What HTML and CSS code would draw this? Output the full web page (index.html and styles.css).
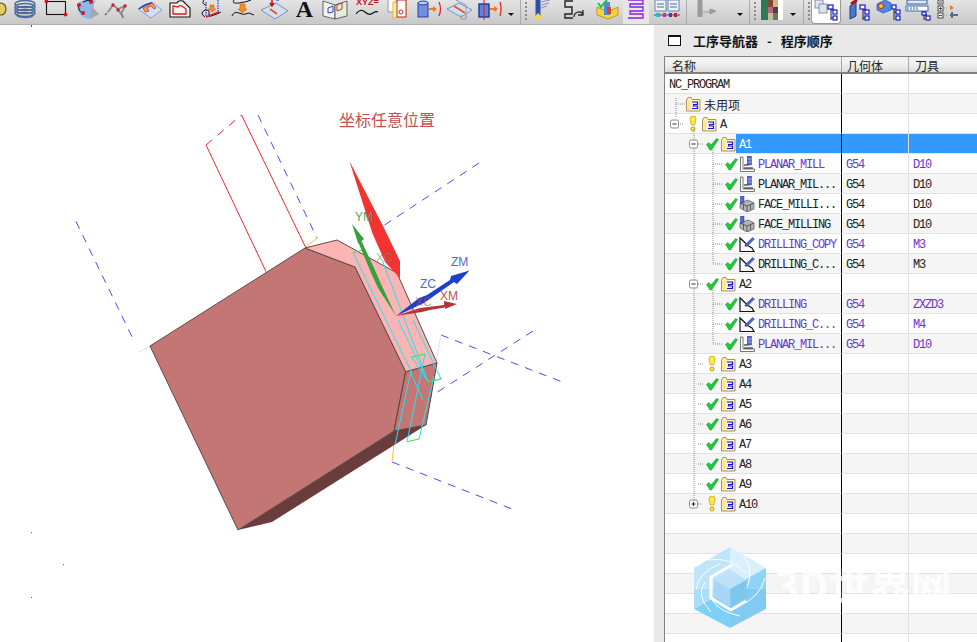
FILE: index.html
```html
<!DOCTYPE html>
<html lang="zh">
<head>
<meta charset="utf-8">
<title>工序导航器</title>
<link rel="stylesheet" href="styles.css">
</head>
<body>
<svg class="defs" width="0" height="0">
  <defs>
    <symbol id="check" viewBox="0 0 16 16">
      <path d="M2.5 8.5 L5 6.5 L7 9 L12.5 2.5 L14.5 3.5 L7.5 14 L6 14 Z" fill="#1fc93a" stroke="#128a26" stroke-width=".5"/>
    </symbol>
    <symbol id="bulb" viewBox="0 0 16 16">
      <path d="M5 3 Q5 0 8 0 Q11 0 11 3 Q11 5 9.5 9 L6.5 9 Q5 5 5 3 Z" fill="#ffe84a" stroke="#c9a400" stroke-width=".8"/>
      <circle cx="8" cy="13" r="2" fill="#ffe84a" stroke="#a88a00" stroke-width=".8"/>
    </symbol>
    <symbol id="folder" viewBox="0 0 16 16">
      <path d="M1.5 3.5 V15 H15 V3.5 H7 L6 1.5 H3 L2 3.5 Z" fill="#fff3c2" stroke="#a8925a" stroke-width="1"/>
      <path d="M7 6 H12.5 V8.5 H8.5 V10 H12.5 V12.5 H7" fill="none" stroke="#1212e0" stroke-width="1.2"/>
      <rect x="2.5" y="4.5" width="3" height="9.5" fill="#ffe58f"/>
    </symbol>
    <symbol id="mill" viewBox="0 0 16 16">
      <path d="M1.5 1 V15.5 H15.5 V13 H4 V1 Z" fill="#fff" stroke="#666" stroke-width=".9"/>
      <path d="M5 12 H14 M5 9 H9 V1" fill="none" stroke="#111" stroke-width="1"/>
      <rect x="8.5" y="0" width="4" height="9" fill="#5a66c8" stroke="#2c3590" stroke-width=".5"/>
      <path d="M8.5 3 H12.5 M8.5 6 H12.5" stroke="#b8c0f0" stroke-width=".8"/>
    </symbol>
    <symbol id="face" viewBox="0 0 16 16">
      <path d="M1 7 L9 4 L15 7 V13 L8 16 L1 12 Z" fill="#b4b4b4" stroke="#555" stroke-width=".7"/>
      <path d="M1 7 L8 10 L15 7 M8 10 V16 M4.5 8.5 V13.5 M11.5 8.5 V14" fill="none" stroke="#444" stroke-width=".8"/>
      <rect x="1.5" y="0" width="3.5" height="7" fill="#5a66c8" stroke="#2c3590" stroke-width=".5"/>
    </symbol>
    <symbol id="drill" viewBox="0 0 16 16">
      <path d="M1 2 V15.5 H15 L13 12 L9 9.5 L1 2 Z" fill="#fff" stroke="#111" stroke-width="1.2"/>
      <path d="M6 9 L13.5 1.5 L15.5 3 L8 10.5 Z" fill="#4d66d0" stroke="#2c3590" stroke-width=".5"/>
      <path d="M5 10 L7 9 L7.5 10.5 Z" fill="#222"/>
    </symbol>
  </defs>
</svg>

<header class="toolbar">
  <svg class="tb-cut" viewBox="0 0 10 24"><ellipse cx="1" cy="9" rx="5" ry="6" fill="#e4cc66" stroke="#6a5a18" stroke-width="1.2"/></svg>
  <svg class="tb" viewBox="0 0 31 24"><g fill="none" stroke="#4d6d9c" stroke-width="1.4"><ellipse cx="15" cy="4" rx="10" ry="3.5"/><ellipse cx="15" cy="7" rx="10" ry="3.5"/><ellipse cx="15" cy="10" rx="10" ry="3.5"/><ellipse cx="15" cy="13" rx="10" ry="3.5"/><ellipse cx="15" cy="15" rx="8" ry="2.6"/></g></svg>
  <svg class="tb" viewBox="0 0 31 24"><rect x="5.5" y="1.5" width="19" height="13" fill="none" stroke="#111" stroke-width="1.1"/><circle cx="5.5" cy="1.5" r="2" fill="#d81818"/><circle cx="24.5" cy="14.5" r="2" fill="#d81818"/></svg>
  <svg class="tb" viewBox="0 0 31 24"><path d="M5 5 Q10 -3 24 1 Q18 8 27 14 L18 19 Q6 18 5 5 Z" fill="#8cb8e8"/><path d="M18 19 L27 14 L20 7 Z" fill="#a8a8a8"/><path d="M7 4 Q5 11 12 14 M11 2 Q16 -1 21 1" fill="none" stroke="#111" stroke-width="1"/><g fill="#d81818"><circle cx="7" cy="5" r="2"/><circle cx="11" cy="13" r="2"/><circle cx="19" cy="2" r="2"/></g></svg>
  <svg class="tb" viewBox="0 0 31 24"><path d="M5 12 L10 5 L15 9 L22 6 L18 14 L15 9" fill="none" stroke="#8a8a8a" stroke-width="1.8"/><path d="M4 13 L2 15 M19 14 L20 18" stroke="#777" stroke-width="1.6"/><g fill="#c8242a"><circle cx="10" cy="5" r="1.7"/><circle cx="15" cy="10" r="1.7"/><circle cx="22" cy="6" r="1.7"/></g></svg>
  <svg class="tb" viewBox="0 0 31 24"><path d="M4 9 L18 2 L28 10 L17 18 Z" fill="#cfe0f4" stroke="#8aa0c0"/><path d="M5 9 Q11 4 18 3" fill="none" stroke="#1f3fd0" stroke-width="1.4"/><path d="M9 8 L18 3 L22 8 L20 9 L17 6 L13 8 L15 11 L11 12 Z" fill="#f0a050" stroke="#d02020" stroke-width=".7"/></svg>
  <svg class="tb" viewBox="0 0 31 24"><path d="M5 3 L5 17 H25 V8 L18 1 Q13 0 12 3 Z" fill="#f4f4f4" stroke="#111" stroke-width="1.1"/><path d="M8 6 L8 14 H21 V9 L17 6 Q14 5 13 7 Z" fill="none" stroke="#e01818" stroke-width="1.3"/></svg>
  <svg class="tb" viewBox="0 0 31 24"><path d="M8 0 Q5 4 10 5 M9 17 Q3 13 9 10 Q14 9 13 15 Q13 17 15 16 Q22 14 25 12" fill="none" stroke="#111" stroke-width="1"/><path d="M10 17 L23 12" stroke="#e01818" stroke-width="1.4"/><path d="M10 2 V16 M22 0 V13" stroke="#1414e0" stroke-width="1" stroke-dasharray="1.5 1"/><path d="M14 5 H18 V9 H20 L16 12 L12 9 H14 Z" fill="#f09020" stroke="#c85010" stroke-width=".5"/></svg>
  <svg class="tb" viewBox="0 0 31 24"><path d="M7 0 Q4 4 12 3 Q20 2 24 0 M5 16 Q7 11 12 13 Q16 16 22 13 L27 15" fill="none" stroke="#111" stroke-width="1"/><path d="M13 4 H18 V9 H20 L15.500 13 L11 9 H13 Z" fill="#f09020" stroke="#c85010" stroke-width=".5"/></svg>
  <svg class="tb" viewBox="0 0 31 24"><path d="M3 10 L18 3 L30 11 L17 19 Z" fill="#cfe0f4" stroke="#7a92b4"/><path d="M12 9 L19 14" stroke="#f05010" stroke-width="1.6"/><path d="M14 0 V5 M12 3 L14 6 L16 3" fill="none" stroke="#c01010" stroke-width="1.5"/><path d="M18 0 H21" stroke="#1414e0" stroke-width="1"/></svg>
  <svg class="tb" viewBox="0 0 31 24"><text class="tb-a" x="15.500" y="17" text-anchor="middle">A</text></svg>
  <svg class="tb" viewBox="0 0 31 24"><path d="M3 1 L15 5 V19 L3 16 Z" fill="#f0f4ea" stroke="#444" stroke-width=".8"/><path d="M15 5 L27 1 V16 L15 19 Z" fill="#dfeedd" stroke="#444" stroke-width=".8"/><path d="M8 8 L13 6 V12 L8 13 Z" fill="none" stroke="#3040c8"/><path d="M17 5 L22 3 V9 L17 11 Z" fill="none" stroke="#d03030"/></svg>
  <svg class="tb" viewBox="0 0 31 24"><text class="tb-xyz" x="5" y="5">XYZ=</text><path d="M5 14 Q9 8 14 12 Q18 16 22 13 Q25 11 27 12" fill="none" stroke="#111" stroke-width="1.2"/></svg>
  <svg class="tb" viewBox="0 0 31 24"><path d="M6 0 V12 H14 V0" fill="#f8f8f8" stroke="#999"/><path d="M11 2 H24 V17 H13 L11 19 Z" fill="#ffef9a" stroke="#d8c030"/><path d="M15 0 H24 V17 H15 Z" fill="#fff" stroke="#d02020"/><circle cx="19" cy="12" r="2" fill="none" stroke="#d02020"/></svg>
  <svg class="tb" viewBox="0 0 31 24"><rect x="5" y="3" width="10" height="14" fill="#6f8fe0" stroke="#2c3fa0"/><ellipse cx="10" cy="3" rx="5" ry="2" fill="#b8c8f0" stroke="#2c3fa0"/><path d="M16 8 H20 V6 L24 9 L20 12 V10 H16 Z" fill="#f07818"/><path d="M26 2 Q29 9 26 16" fill="none" stroke="#e02020" stroke-width="1.2"/></svg>
  <svg class="tb" viewBox="0 0 31 24"><path d="M3 9 L15 3 L28 10 L17 17 Z" fill="#cfe0f4" stroke="#7a92b4"/><path d="M10 6 L21 13" stroke="#f05010" stroke-width="1.500"/><path d="M12 0 L22 5 V19 H17 V15" fill="none" stroke="#8a98c0"/></svg>
  <svg class="tb" viewBox="0 0 31 24"><rect x="4" y="4" width="10" height="13" fill="#5f83d8" stroke="#1838a0" stroke-width="1.4"/><path d="M9 0 V20" stroke="#d02020"/><path d="M15 8 H19 V6 L23 9 L19 12 V10 H15 Z" fill="#f07818"/><path d="M25 2 Q27 9 25 16" fill="none" stroke="#e02020" stroke-width="1.2"/></svg>
  <span class="caret"></span>

  <span class="sep sep-a"></span>
  <svg class="tn" viewBox="0 0 26 24"><path d="M13 0 V16" stroke="#3050a8" stroke-width="5"/><path d="M16 2 L25 0 M16 5 L24 3 M16 8 L22 6" stroke="#8a9ab8" stroke-width="1.2"/><path d="M9 17 L13 13 L17 17 L13 20 Z" fill="#f4d848"/></svg>
  <svg class="tn ml9" viewBox="0 0 26 24"><path d="M13 1 H5 V7 H12 V14 H5 V18 H13" fill="none" stroke="#222" stroke-width="1.4"/><path d="M14 17 A5 5 0 0 1 23 14 M23 10 V15 H18" fill="none" stroke="#222" stroke-width="1.3"/></svg>
  <svg class="tn ml8" viewBox="0 0 26 24"><path d="M3 7 L14 12 L24 7 V15 L14 19 L3 15 Z" fill="#f6d43c" stroke="#b89a20"/><rect x="10" y="2" width="6" height="13" fill="#4d8ad8"/><rect x="13" y="7" width="4" height="7" fill="#e0402a"/><path d="M4 3 L7 7 L13 0" fill="none" stroke="#28c040" stroke-width="2"/></svg>
  <svg class="tn hl ml3" viewBox="0 0 26 24"><path d="M5 0 H20 V4 H7 V7 H20 V11 H7 V14 H20 V18 H5" fill="none" stroke="#8a20e0" stroke-width="1.300"/></svg>
  <svg class="tn ml5" viewBox="0 0 26 24"><path d="M1 0 H12 V11 H1 Z M14 0 H25 V11 H14 Z" fill="#eef2fa" stroke="#4d6d9c" stroke-width=".8"/><path d="M3 4 H10 M3 7 H10 M16 4 H23 M16 7 H23" stroke="#4d6d9c"/><path d="M0 15 H26" stroke="#446" stroke-width="1"/><g><rect x="2" y="13" width="4" height="4" fill="#1fc0c8"/><rect x="9" y="13" width="3" height="4" fill="#e020a0"/><rect x="15" y="13" width="3" height="4" fill="#3040c8"/><rect x="20" y="13" width="3" height="4" fill="#c02030"/></g></svg>
  <span class="sep sep-b"></span>
  <svg class="tn" viewBox="0 0 26 24"><path d="M9 0 V17" stroke="#9a9a9a" stroke-width="5"/><path d="M12 12 H19 V9 L25 11 L19 14 V12" fill="#9a9a9a" stroke="#9a9a9a"/></svg>
  <span class="caret ml18"></span>
  <span class="sep sep-c"></span>
  <svg class="tn ml5" viewBox="0 0 26 24"><rect x="2" y="0" width="22" height="20" fill="#fff"/><rect x="2" y="0" width="7" height="20" fill="#2e7a52"/><rect x="9" y="0" width="5" height="7" fill="#7a4a34"/><rect x="14" y="0" width="5" height="7" fill="#d8b090"/><rect x="9" y="7" width="5" height="6" fill="#c0607a"/><rect x="14" y="7" width="5" height="6" fill="#46463c"/><rect x="9" y="13" width="5" height="7" fill="#c8b8a0"/><rect x="14" y="13" width="5" height="7" fill="#6a7a58"/></svg>
  <span class="caret ml3"></span>
  <span class="sep sep-d"></span>
  <span class="tab-on"><svg class="tn" viewBox="0 0 26 24"><rect x="2" y="0" width="8" height="8" fill="#dce6f4" stroke="#5a6a8a" stroke-width=".7"/><rect x="6" y="4" width="8" height="9" fill="#dce6f4" stroke="#5a6a8a" stroke-width=".7"/><path d="M18 6 V20 M18 10 H22 M18 18 H22" stroke="#222"/><g fill="#fff" stroke="#1818d0" stroke-width="1.200"><rect x="15" y="5" width="5" height="4"/><rect x="20" y="10" width="4" height="4"/><rect x="20" y="16" width="4" height="4"/></g></svg></span>
  <svg class="tn ml4" viewBox="0 0 26 24"><path d="M5 6 L11 2 V16 L5 19 Z" fill="#4a78c8" stroke="#1c3a88"/><path d="M6 4 L12 0" stroke="#b01818" stroke-width="3"/><path d="M18 6 V20 M18 10 H22 M18 18 H22" stroke="#222"/><g fill="#fff" stroke="#1818d0" stroke-width="1.200"><rect x="15" y="5" width="5" height="4"/><rect x="20" y="10" width="4" height="4"/><rect x="20" y="16" width="4" height="4"/></g></svg>
  <svg class="tn ml4" viewBox="0 0 26 24"><path d="M2 4 L10 0 L16 3 V10 L8 13 L2 10 Z" fill="#4d8ae8" stroke="#2050a8" stroke-width=".7"/><circle cx="6" cy="6" r="2.500" fill="#f0d030" stroke="#d02020"/><path d="M19 5 V20 M19 12 H22" stroke="#222"/><g fill="#fff" stroke="#1818d0" stroke-width="1.200"><rect x="17" y="5" width="4" height="4"/><rect x="21" y="10" width="4" height="4"/><rect x="21" y="16" width="4" height="4"/></g></svg>
  <svg class="tn ml4" viewBox="0 0 26 24"><rect x="2" y="0" width="20" height="4" fill="#dce6f4" stroke="#1c3a88" stroke-width=".8"/><rect x="1" y="6" width="22" height="5" fill="#fff" stroke="#3a6aa8"/><path d="M3 7 V10 M6 7 V10 M9 7 V10 M12 7 V10" stroke="#3a6aa8"/><path d="M19 11 V20 M19 15 H22" stroke="#222"/><g fill="#fff" stroke="#1818d0" stroke-width="1.200"><rect x="17" y="12" width="4" height="3"/><rect x="21" y="16" width="4" height="4"/></g></svg>
  <svg class="tn ml4" viewBox="0 0 26 24"><g fill="#fff" stroke="#222" stroke-width=".8"><rect x="3" y="0" width="5" height="4"/><rect x="3" y="6" width="5" height="5"/><rect x="3" y="13" width="5" height="5"/></g><path d="M4 2 H7 M4 8.500 H7 M5.500 7 V10 M4 15.500 H7" stroke="#222" stroke-width=".8"/><path d="M9 8 H13 M9 15 H13" stroke="#999" stroke-dasharray="1 1"/><path d="M15 5 L19 8 L15 10 Z" fill="#f07818"/><path d="M15 15 H23 M17 12 V18" stroke="#4d6d9c" stroke-width="2"/></svg>
</header>

<main class="workspace">
  <section class="viewport">
    <svg class="scene" viewBox="0 25 654 617">
      <g class="dots"><rect x="31" y="25" width="1" height="2"/><rect x="31" y="532" width="1" height="1"/><rect x="63" y="564" width="1" height="1"/><rect x="31" y="597" width="1" height="1"/></g>

      <path class="thin-red" d="M206 145 L266 271.500 M241.500 115 L306 248"/>
      <path class="dash-red" d="M206 145 L241.500 115"/>
      <path class="dash-blue" d="M258 115 L317 238 M76 221.500 L135 343 M479 163 L380 228 M441 335 L565 383 M533 331 L425 400 M392 462 L517 511"/>
      <path class="thin-pink" d="M139 352 L150 346 M370 231 L381 250 M441 335 L436 363"/>
      <path class="thin-orange" d="M317 238 L306 247 M415 385 L423 400 M394 445 L392 461"/>

      <path class="face-dark" d="M394 431 L426 425 L272 522 L238 530 Z"/>
      <path class="face-main" d="M150 346 L305 248 L355 267 L405.700 371.700 L394 431 L238 530 Z"/>
      <path class="face-side" d="M405.700 371.700 L437 363 L426 425 L394 431 Z"/>
      <path class="face-pink" d="M305 248 L337 240 L397 273 L437 363 L405.700 371.700 L355 267 Z"/>

      <path class="thin-cyan" d="M353 252.700 L411 371 L395 445 M383 262 L428 382 M398 320 L428 381.700 L411 356 M413 320 L441 379 L428 381.700 M425 354 L407 441.700 M434 376 L419 439 M410 371 L423 400"/>
      <path class="thin-green" d="M353 252.700 L363 250 M412 357 L425 354 M428 382 L441 379 M407 441.700 L419 439"/>

      <path class="arrow-red" d="M349.300 160.700 L383 226 L400 261 L400 278 L385 262 L372 232 Z"/>

      <path class="gz-green" d="M352 224 L364 239 L361.500 241 L374 268 L381 284 L396 316 L378 288 L372 275 L359 244 L358 243 Z"/>
      <path class="gz-blue" d="M396 316 L419 298 L427 295 L450 280 L451 276 L469.500 270.500 L457 284 L454 282 L431 298 L424 303 Z"/>
      <path class="gz-red" d="M396 316 L420 308 L428 307 L444 305 L444 301 L457 304 L445 309 L445 307.500 L430 310 L422 312 Z"/>

      <text class="gz-t t-green" x="355" y="221">YM</text>
      <text class="gz-t t-green t-faint" x="376" y="262">XC</text>
      <text class="gz-t t-blue" x="451" y="266">ZM</text>
      <text class="gz-t t-blue" x="420" y="288">ZC</text>
      <text class="gz-t t-red" x="440" y="300">XM</text>
      <text class="gz-t t-red t-faint" x="415" y="306">XC</text>
    </svg>
    <p class="caption">坐标任意位置</p>
  </section>

  <aside class="panel">
    <div class="panel-head">
      <span class="win-box"></span>
      <h2 class="panel-title">工序导航器 - 程序顺序</h2>
    </div>
    <div class="table">
      <div class="thead">
        <span class="th th-name">名称</span>
        <span class="th th-geo">几何体</span>
        <span class="th th-tool">刀具</span>
      </div>
      <div class="tbody">
        <div class="row"><span class="c-name l0"><span class="tx">NC_PROGRAM</span></span><span class="c-geo"></span><span class="c-tool"></span></div>
        <div class="row"><span class="c-name l1"><svg class="ic"><use href="#folder"/></svg><span class="tx cjk">未用项</span></span><span class="c-geo"></span><span class="c-tool"></span></div>
        <div class="row"><span class="c-name l1"><svg class="ic"><use href="#bulb"/></svg><svg class="ic"><use href="#folder"/></svg><span class="tx">A</span></span><span class="c-geo"></span><span class="c-tool"></span></div>
        <div class="row sel"><span class="c-name l2"><svg class="ic"><use href="#check"/></svg><svg class="ic"><use href="#folder"/></svg><span class="tx">A1</span></span><span class="c-geo"></span><span class="c-tool"></span></div>
        <div class="row vio"><span class="c-name l3"><svg class="ic"><use href="#check"/></svg><svg class="ic"><use href="#mill"/></svg><span class="tx">PLANAR_MILL</span></span><span class="c-geo">G54</span><span class="c-tool">D10</span></div>
        <div class="row"><span class="c-name l3"><svg class="ic"><use href="#check"/></svg><svg class="ic"><use href="#mill"/></svg><span class="tx">PLANAR_MIL...</span></span><span class="c-geo">G54</span><span class="c-tool">D10</span></div>
        <div class="row"><span class="c-name l3"><svg class="ic"><use href="#check"/></svg><svg class="ic"><use href="#face"/></svg><span class="tx">FACE_MILLI...</span></span><span class="c-geo">G54</span><span class="c-tool">D10</span></div>
        <div class="row"><span class="c-name l3"><svg class="ic"><use href="#check"/></svg><svg class="ic"><use href="#face"/></svg><span class="tx">FACE_MILLING</span></span><span class="c-geo">G54</span><span class="c-tool">D10</span></div>
        <div class="row vio"><span class="c-name l3"><svg class="ic"><use href="#check"/></svg><svg class="ic"><use href="#drill"/></svg><span class="tx">DRILLING_COPY</span></span><span class="c-geo">G54</span><span class="c-tool">M3</span></div>
        <div class="row"><span class="c-name l3"><svg class="ic"><use href="#check"/></svg><svg class="ic"><use href="#drill"/></svg><span class="tx">DRILLING_C...</span></span><span class="c-geo">G54</span><span class="c-tool">M3</span></div>
        <div class="row"><span class="c-name l2"><svg class="ic"><use href="#check"/></svg><svg class="ic"><use href="#folder"/></svg><span class="tx">A2</span></span><span class="c-geo"></span><span class="c-tool"></span></div>
        <div class="row vio"><span class="c-name l3"><svg class="ic"><use href="#check"/></svg><svg class="ic"><use href="#drill"/></svg><span class="tx">DRILLING</span></span><span class="c-geo">G54</span><span class="c-tool">ZXZD3</span></div>
        <div class="row vio"><span class="c-name l3"><svg class="ic"><use href="#check"/></svg><svg class="ic"><use href="#drill"/></svg><span class="tx">DRILLING_C...</span></span><span class="c-geo">G54</span><span class="c-tool">M4</span></div>
        <div class="row vio"><span class="c-name l3"><svg class="ic"><use href="#check"/></svg><svg class="ic"><use href="#mill"/></svg><span class="tx">PLANAR_MIL...</span></span><span class="c-geo">G54</span><span class="c-tool">D10</span></div>
        <div class="row"><span class="c-name l2"><svg class="ic"><use href="#bulb"/></svg><svg class="ic"><use href="#folder"/></svg><span class="tx">A3</span></span><span class="c-geo"></span><span class="c-tool"></span></div>
        <div class="row"><span class="c-name l2"><svg class="ic"><use href="#check"/></svg><svg class="ic"><use href="#folder"/></svg><span class="tx">A4</span></span><span class="c-geo"></span><span class="c-tool"></span></div>
        <div class="row"><span class="c-name l2"><svg class="ic"><use href="#check"/></svg><svg class="ic"><use href="#folder"/></svg><span class="tx">A5</span></span><span class="c-geo"></span><span class="c-tool"></span></div>
        <div class="row"><span class="c-name l2"><svg class="ic"><use href="#check"/></svg><svg class="ic"><use href="#folder"/></svg><span class="tx">A6</span></span><span class="c-geo"></span><span class="c-tool"></span></div>
        <div class="row"><span class="c-name l2"><svg class="ic"><use href="#check"/></svg><svg class="ic"><use href="#folder"/></svg><span class="tx">A7</span></span><span class="c-geo"></span><span class="c-tool"></span></div>
        <div class="row"><span class="c-name l2"><svg class="ic"><use href="#check"/></svg><svg class="ic"><use href="#folder"/></svg><span class="tx">A8</span></span><span class="c-geo"></span><span class="c-tool"></span></div>
        <div class="row"><span class="c-name l2"><svg class="ic"><use href="#check"/></svg><svg class="ic"><use href="#folder"/></svg><span class="tx">A9</span></span><span class="c-geo"></span><span class="c-tool"></span></div>
        <div class="row"><span class="c-name l2"><svg class="ic"><use href="#bulb"/></svg><svg class="ic"><use href="#folder"/></svg><span class="tx">A10</span></span><span class="c-geo"></span><span class="c-tool"></span></div>
        <div class="row"><span class="c-name"></span><span class="c-geo"></span><span class="c-tool"></span></div>
        <div class="row"><span class="c-name"></span><span class="c-geo"></span><span class="c-tool"></span></div>
        <div class="row"><span class="c-name"></span><span class="c-geo"></span><span class="c-tool"></span></div>
        <div class="row"><span class="c-name"></span><span class="c-geo"></span><span class="c-tool"></span></div>
        <div class="row"><span class="c-name"></span><span class="c-geo"></span><span class="c-tool"></span></div>
        <div class="row"><span class="c-name"></span><span class="c-geo"></span><span class="c-tool"></span></div>
        <div class="row"><span class="c-name"></span><span class="c-geo"></span><span class="c-tool"></span></div>

        <svg class="tree-lines" viewBox="665 74 177 440">
          <path class="dotline" d="M676 98 V118 M676 104 H685 M680 124 H684 M694 129 V500 M698 144 H703 M698 284 H703 M698 364 H703 M698 384 H703 M698 404 H703 M698 424 H703 M698 444 H703 M698 464 H703 M698 484 H703 M698 504 H702 M713 150 V264 M713 164 H722 M713 184 H722 M713 204 H722 M713 224 H722 M713 244 H722 M713 264 H722 M713 290 V344 M713 304 H722 M713 324 H722 M713 344 H722"/>
          <g class="exp"><rect x="670.500" y="120" width="8" height="8" rx="1.500"/><path d="M672.500 124 H676.500"/></g>
          <g class="exp"><rect x="689.500" y="140" width="8" height="8" rx="1.500"/><path d="M691.500 144 H695.500"/></g>
          <g class="exp"><rect x="689.500" y="280" width="8" height="8" rx="1.500"/><path d="M691.500 284 H695.500"/></g>
          <g class="exp"><rect x="689.500" y="500" width="8" height="8" rx="1.500"/><path d="M691.500 504 H695.500 M693.500 502 V506"/></g>
        </svg>
      </div>
    </div>
  </aside>
</main>

<div class="watermark">
  <svg class="wm-logo" viewBox="694 547 72 81">
    <path class="w1" d="M730 547 L766 568 L730 588 Z"/>
    <path class="w2" d="M766 568 L766 589 L730 588 Z"/>
    <path class="w3" d="M766 589 L766 609 L730 628 L730 588 Z"/>
    <path class="w4" d="M730 628 L694 609 L730 588 Z"/>
    <path class="w5" d="M694 609 L694 589 L730 588 Z"/>
    <path class="w6" d="M694 589 L694 568 L730 547 L730 588 Z"/>
    <path class="w-arc" d="M744 556 Q756 575 744 592 M765 578 Q760 598 738 606 M740 616 Q720 612 712 600 M711 612 Q695 595 705 582 M696 590 Q698 572 720 564 M708 560 Q730 556 746 573"/>
    <path class="w-ring" d="M732 565 L711 577 L711 598 L731 610 L746 601"/>
    <path class="c-top" d="M730.500 570 L746.500 580 L730.500 589 L714 580 Z"/>
    <path class="c-left" d="M714 580 L730.500 589 L730.500 606.500 L714 597 Z"/>
    <path class="c-right" d="M746.500 580 L746.500 597 L730.500 606.500 L730.500 589 Z"/>
  </svg>
  <span class="wm-text">3D世界网</span>
</div>
</body>
</html>
```
FILE: styles.css
```css
* { box-sizing: border-box; }
html, body { margin: 0; padding: 0; width: 977px; height: 642px; overflow: hidden; background: #fff; }
body { position: relative; font-family: "Liberation Mono", "Noto Sans CJK SC", monospace; color: #222; }
.defs { position: absolute; }

/* toolbar */
.toolbar { display: flex; align-items: flex-start; height: 25px; overflow: hidden; background: linear-gradient(#e4e4e4, #c8c8c8); border-bottom: 1px solid #b0b0b0; }
.toolbar svg { display: block; flex: none; overflow: hidden; }
.tb-cut { width: 10px; height: 24px; }
.tb { width: 31px; height: 24px; }
.tn { width: 26px; height: 24px; }
.tb-a { font: bold 24px "Liberation Serif", serif; fill: #111; }
.tb-xyz { font: bold 9px "Liberation Sans", sans-serif; fill: #c81818; }
.caret { flex: none; width: 10px; height: 24px; position: relative; }
.caret::after { content: ""; position: absolute; left: 2px; top: 13px; border-left: 3px solid transparent; border-right: 3px solid transparent; border-top: 3px solid #111; }
.sep { flex: none; width: 5px; height: 24px; border-left: 1px solid #aaa; position: relative; }
.sep::after { content: ""; position: absolute; left: 4px; top: 2px; width: 2px; height: 20px; background: repeating-linear-gradient(#8c8c8c 0 2px, transparent 2px 4px); }
.sep-a { margin-left: 4px; }
.sep-b { margin-left: 6px; }
.sep-b::after { display: none; }
.sep-c { margin-left: 4px; }
.sep-d { margin-left: 5px; }
.ml3 { margin-left: 3px; }
.ml4 { margin-left: 4px; }
.ml5 { margin-left: 5px; }
.ml8 { margin-left: 8px; }
.ml9 { margin-left: 9px; }
.ml18 { margin-left: 18px; }
.hl { background: #e6e6e6; }
.tab-on { flex: none; display: flex; justify-content: center; width: 30px; height: 24px; margin-left: 3px; background: #fff; border: 1px solid #999; border-top: 0; border-radius: 0 0 4px 4px; }

/* layout */
.workspace { display: flex; height: 617px; }
.viewport { position: relative; flex: none; width: 654px; height: 617px; background: #fff; }
.scene { display: block; width: 654px; height: 617px; }
.caption { position: absolute; left: 339px; top: 84px; margin: 0; font: 16px/20px "Noto Sans CJK SC", sans-serif; color: #c2504c; }

/* 3D scene */
.dots { fill: #555; }
.thin-red { stroke: #f02830; stroke-width: 1; fill: none; }
.dash-red { stroke: #f02830; stroke-width: 1; fill: none; stroke-dasharray: 8 7; }
.dash-blue { stroke: #4a4af0; stroke-width: 1; fill: none; stroke-dasharray: 8 7; }
.thin-pink { stroke: #f8d8e2; stroke-width: 1; fill: none; }
.thin-orange { stroke: #f8c030; stroke-width: 1; fill: none; }
.face-main { fill: #c47674; stroke: #5a4a4a; stroke-width: 1; }
.face-side { fill: #c47674; stroke: #5a4040; stroke-width: 1; }
.face-pink { fill: #fdb4b4; stroke: #5a4a4a; stroke-width: 1; }
.face-dark { fill: #6b3c3c; }
.thin-cyan { stroke: #18e8f0; stroke-width: 1; fill: none; }
.thin-green { stroke: #30e840; stroke-width: 1; fill: none; }
.arrow-red { fill: #f43232; }
.gz-green { fill: #36a03c; }
.gz-blue { fill: #1c3fd0; }
.gz-red { fill: #b83434; }
.gz-t { font: 12px "Liberation Sans", sans-serif; }
.t-green { fill: #5a9f66; }
.t-blue { fill: #4a68e0; }
.t-red { fill: #c05050; }
.t-faint { opacity: .6; }

/* panel */
.panel { flex: none; width: 323px; height: 617px; background: #e9e9e9; padding-left: 10px; display: flex; flex-direction: column; }
.panel-head { display: flex; align-items: center; height: 31px; flex: none; padding-left: 4px; }
.win-box { width: 13px; height: 11px; border: 1px solid #111; border-top-width: 2px; background: #fff; }
.panel-title { margin: 0 0 0 12px; font: bold 13px/16px "Noto Sans CJK SC", sans-serif; word-spacing: 6px; color: #111; white-space: nowrap; }
.table { flex: 1; min-height: 0; overflow: hidden; border-left: 1px solid #808080; }
.thead { display: grid; grid-template-columns: 177px 67px 1fr; height: 18px; border-top: 1px solid #808080; border-bottom: 2px solid #808080; background: linear-gradient(#f2f2f2 0, #f2f2f2 40%, #dcdcdc 100%); }
.th { font: 12px/17px "Noto Sans CJK SC", sans-serif; color: #222; border-right: 1px solid #a8a8a8; height: 15px; }
.th-name { padding-left: 7px; }
.th-geo { padding-left: 5px; }
.th-tool { padding-left: 6px; border-right: 0; }
.tbody { position: relative; }
.row { display: grid; grid-template-columns: 177px 67px 1fr; height: 20px; font-size: 12px; letter-spacing: -1.2px; line-height: 23px; }
.row > span { border-bottom: 1px solid #e2e2e2; height: 20px; }
.row:nth-child(even) { background: #f5f5f5; }
.row:nth-child(odd) { background: #fff; }
.c-name { display: flex; align-items: center; padding-top: 1px; border-right: 1px solid #000; }
.c-geo { padding-left: 4px; border-right: 1px solid #e2e2e2; }
.c-tool { padding-left: 4px; }
.l0 { padding-left: 4px; }
.l1 { padding-left: 20px; }
.l2 { padding-left: 39px; }
.l3 { padding-left: 58px; }
.ic { flex: none; width: 16px; height: 16px; display: block; }
.tx { margin: 2px 0 0 3px; white-space: nowrap; }
.l0 .tx { margin-left: 0; }
.cjk { font: 12px/19px "Noto Sans CJK SC", sans-serif; letter-spacing: 0; margin-top: 0; }
.vio { color: #6a35cf; }
.sel { color: #fff; }
.sel .c-name { padding-right: 0; }
.sel .tx { flex: 1; align-self: stretch; margin: -1px 0 0; padding-left: 3px; background: #3399ff; }
.sel .c-geo, .sel .c-tool { background: #3399ff; }
.tree-lines { position: absolute; left: 0; top: 0; width: 177px; height: 440px; pointer-events: none; }
.dotline { fill: none; stroke: #8c8c8c; stroke-width: 1; stroke-dasharray: 1 1; }
.exp rect { fill: #fff; stroke: #8c8c8c; stroke-width: 1; }
.exp path { fill: none; stroke: #222; stroke-width: 1; }

/* watermark */
.watermark { position: absolute; left: 694px; top: 547px; width: 283px; height: 81px; pointer-events: none; }
.wm-logo { position: absolute; left: 0; top: 0; width: 72px; height: 81px; }
.w1 { fill: #d8effc; }
.w2 { fill: #8ed4f8; }
.w3 { fill: #82caf2; }
.w4 { fill: #7ed0f9; }
.w5 { fill: #a9def9; }
.w6 { fill: #c0e5fa; }
.w-arc { fill: none; stroke: #fff; stroke-width: 1; }
.w-ring { fill: none; stroke: #fff; stroke-width: 3; }
.c-top { fill: #bde2f8; }
.c-left { fill: #a6d8f6; }
.c-right { fill: #7cc6ef; }
.wm-text { position: absolute; left: 81px; top: 12px; font: bold 41px/48px "Noto Sans CJK SC", sans-serif; color: #fff; opacity: .8; white-space: nowrap; }
```
